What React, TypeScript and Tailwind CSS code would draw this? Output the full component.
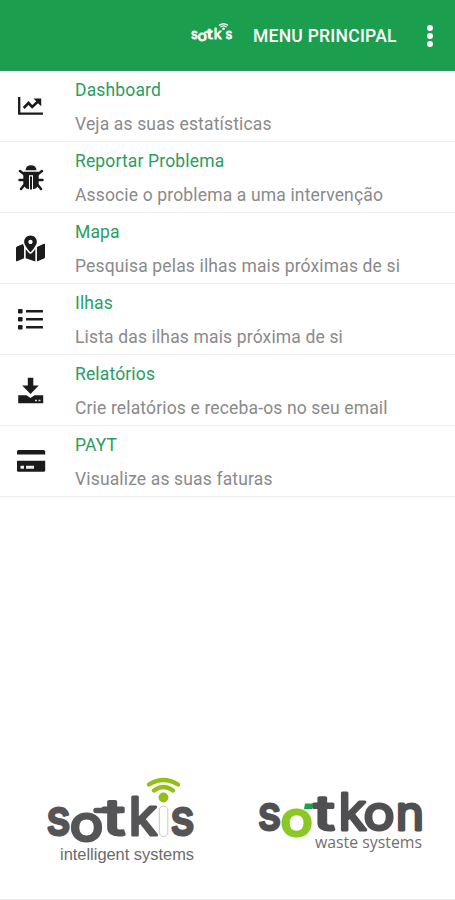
import { FaMapMarkedAlt } from "react-icons/fa";

const ChartIcon = () => (
  <svg width="30" height="30" viewBox="1 0 30 30" fill="none" stroke="#1b1b1b">
    <path d="M4.200 6V22.700H28" strokeWidth="2.300" />
    <path d="M8.700 17L13.500 12L17.200 16L23.500 10" strokeWidth="2.600" />
    <path d="M18.500 7.500H26.200V15.200L23.800 12.900L21 10Z" fill="#1b1b1b" stroke="none" />
  </svg>
);

const BugIcon = () => (
  <svg width="30" height="30" viewBox="0.500 -0.500 30 30" fill="#1b1b1b">
    <path d="M10 7.800Q10.500 2.800 15.500 2.800Q20.500 2.800 21 7.800Z" />
    <path d="M7.800 9.300H23.200V20Q23.200 26 17.500 26.800V12.800H13.500V26.800Q7.800 26 7.800 20Z" />
    <path d="M14.500 14H16.500V27H14.500Z" />
    <g fill="none" stroke="#1b1b1b" strokeWidth="2.500" strokeLinecap="round">
      <path d="M9 12L4.500 8.500M22 12L26.500 8.500" />
      <path d="M9 17.500H4M22 17.500H27" />
      <path d="M9.500 21.500L5.500 26.500M21.500 21.500L25.500 26.500" />
    </g>
  </svg>
);

const ListIcon = () => (
  <svg width="30" height="30" viewBox="1 0 30 30" fill="#1b1b1b">
    {[5, 13, 21].map((y) => (
      <g key={y}>
        <rect x="3" y={y - 0.1} width="4.600" height="4.600" rx="1" />
        <rect x="11" y={y + 1} width="17" height="2.600" rx="0.500" />
      </g>
    ))}
  </svg>
);

const DownloadIcon = () => (
  <svg width="30" height="30" viewBox="1 0 30 30" fill="#1b1b1b">
    <path d="M12.800 2.800H18.300V10.500H23.800L15.500 19L7.200 10.500H12.800Z" />
    <path d="M3.200 20.200H11.500L15.500 23L19.500 20.200H28.200V28.200H3.200Z" />
    <path d="M20 25.500H22M23.500 25.500H25.500" stroke="#ddd" strokeWidth="1.300" />
  </svg>
);

const CardIcon = () => (
  <svg width="30" height="30" viewBox="0.500 0 30 30" fill="#1b1b1b">
    <path d="M1.500 8.500V5.500Q1.500 4 3 4H28Q29.700 4 29.700 5.500V8.500Z" />
    <path d="M1.500 14.800H29.700V24.200Q29.700 25.800 28 25.800H3Q1.500 25.800 1.500 24.200Z" />
    <path d="M5 21.300H8.500M10.500 21.300H18.500" stroke="#eee" strokeWidth="3" />
  </svg>
);

const items = [
  { title: "Dashboard", text: "Veja as suas estatísticas", icon: <ChartIcon /> },
  { title: "Reportar Problema", text: "Associe o problema a uma intervenção", icon: <BugIcon /> },
  { title: "Mapa", text: "Pesquisa pelas ilhas mais próximas de si", icon: <FaMapMarkedAlt size={29} /> },
  { title: "Ilhas", text: "Lista das ilhas mais próxima de si", icon: <ListIcon /> },
  { title: "Relatórios", text: "Crie relatórios e receba-os no seu email", icon: <DownloadIcon /> },
  { title: "PAYT", text: "Visualize as suas faturas", icon: <CardIcon /> },
];

// one letter of a logo, centered on x and stretched horizontally by sx
function Letter({ x, y, sx = 1, size, color, children }: any) {
  return (
    <text
      transform={`translate(${x} ${y}) scale(${sx} 1)`}
      fontFamily="Inter"
      fontSize={size}
      fill={color}
      stroke={color}
      strokeWidth="3"
      strokeLinejoin="round"
      textAnchor="middle"
    >
      {children}
    </text>
  );
}

function SotkisLogo({ className, color, accent, tagline }: any) {
  return (
    <svg className={className} viewBox="0 0 150 90" overflow="visible" fill={color}>
      <Letter x={11.500} y={68.500} sx={0.92} size={50} color={color}>s</Letter>
      <Letter x={39.500} y={74.500} sx={1.12} size={50} color={color}>o</Letter>
      <Letter x={67} y={68.500} sx={1.35} size={50} color={color}>t</Letter>
      <Letter x={96} y={68.500} sx={1} size={52} color={color}>k</Letter>
      <Letter x={135.500} y={68.500} sx={0.92} size={50} color={color}>s</Letter>
      <path d="M49 44.500H72" stroke={color} strokeWidth="5.500" strokeLinecap="round" />
      <rect
        x="112.300"
        y="40"
        width="8.500"
        height="30.500"
        rx="4.200"
        fill={tagline ? "#fff" : "none"}
        stroke={tagline ? "#c9c9c9" : "none"}
      />
      <circle cx="116.500" cy="31.500" r="4.900" fill={accent} />
      <g fill="none" stroke={accent} strokeWidth="4.400" strokeLinecap="round">
        <path d="M107 24.500Q116.500 17.500 126 24.500" />
        <path d="M102 18.500Q116.500 9.500 131 18.500" />
      </g>
      {tagline && (
        <text x="13" y="93.500" fontFamily="Liberation Sans" fontSize="16" textLength="134" lengthAdjust="spacingAndGlyphs" fill="#6a6a6a">
          intelligent systems
        </text>
      )}
    </svg>
  );
}

function SotkonLogo() {
  return (
    <svg className="h-[80px] w-[170px]" viewBox="0 0 170 80" overflow="visible">
      <Letter x={11.500} y={43.500} sx={0.92} size={48} color="#505052">s</Letter>
      <Letter x={38.700} y={50} sx={1.12} size={48} color="#8cc825">o</Letter>
      <Letter x={66} y={43.500} sx={1.35} size={48} color="#505052">t</Letter>
      <Letter x={94.500} y={43.500} sx={1} size={51} color="#505052">k</Letter>
      <Letter x={121} y={43.500} sx={1.08} size={48} color="#505052">o</Letter>
      <Letter x={152} y={43.500} sx={1} size={48} color="#505052">n</Letter>
      <path d="M46 23L47 17.500H55L54 23Z" fill="#18a34a" />
      <text x="57" y="62" fontFamily="Open Sans" fontSize="15.500" textLength="107" lengthAdjust="spacingAndGlyphs" fill="#707070">
        waste systems
      </text>
    </svg>
  );
}

export default function App() {
  return (
    <div className="flex h-[900px] w-[455px] flex-col overflow-hidden bg-white font-['Roboto',sans-serif]">
      <header className="flex h-[71px] shrink-0 items-center border-b border-[#2a9560] bg-[#1b9f4f] pl-[191px] text-white">
        <SotkisLogo className="mb-[6px] h-[25px] w-[42px]" color="#fff" accent="#fff" />
        <h1 className="ml-5 w-[144px] pt-[3px] text-[17.500px] font-medium tracking-[0.25px] whitespace-nowrap">MENU PRINCIPAL</h1>
        <div className="ml-[30px] flex flex-col gap-[2px] pt-px">
          <i className="size-[6px] rounded-full bg-white" />
          <i className="size-[6px] rounded-full bg-white" />
          <i className="size-[6px] rounded-full bg-white" />
        </div>
      </header>

      <ul>
        {items.map((item) => (
          <li key={item.title} className="flex h-[71px] border-b border-[#eeeeee]">
            <div className="flex w-[61px] items-center justify-center text-[#1b1b1b]">{item.icon}</div>
            <div className="ml-[14px] pt-[7px]">
              <h2 className="text-[17.500px] leading-6 tracking-[0.150px] text-[#2b9c62]">{item.title}</h2>
              <p className="mt-[10px] text-[17.500px] leading-6 tracking-[0.150px] whitespace-nowrap text-[#8a8a8a]">{item.text}</p>
            </div>
          </li>
        ))}
      </ul>

      <footer className="mt-auto flex h-[134px] items-start border-b border-[#e8e8e8] pl-[47px]">
        <SotkisLogo className="h-[90px] w-[150px]" color="#555557" accent="#93bf18" tagline />
        <div className="mt-[20px] ml-[61px]">
          <SotkonLogo />
        </div>
      </footer>
    </div>
  );
}
